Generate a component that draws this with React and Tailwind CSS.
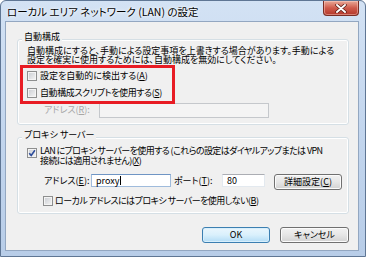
import React from 'react';

const font = "font-['Noto_Sans_CJK_JP',sans-serif] [font-feature-settings:'palt']";

const U = ({ children }) => <span className="inline-block leading-none underline underline-offset-[1px]">{children}</span>;

function Checkbox({ checked }) {
  return (
    <span className="flex h-[10px] w-[10px] shrink-0 items-center justify-center border border-[#8e8f8f] bg-linear-to-br from-[#c9ccd1] to-[#f6f6f6] shadow-[inset_0_0_0_1px_#f4f4f4]">
      {checked && (
        <svg width="8" height="8" viewBox="0 0 8 8">
          <path d="M1.2 4.2 L3.2 6.4 L6.9 1.3" fill="none" stroke="#2e4d9b" strokeWidth="1.6" />
        </svg>
      )}
    </span>
  );
}

function Button({ children, primary, className = '' }) {
  return (
    <div
      className={`flex items-center justify-center rounded-[3px] border text-[9px] leading-none ${
        primary
          ? 'border-[#3c7fb1] bg-linear-to-b from-[#eaf6fd] via-[#d9f0fc] to-[#b2dcf6] shadow-[inset_0_0_0_1px_#d8effc]'
          : 'border-[#707070] bg-linear-to-b from-[#f2f2f2] via-[#e6e6e6] to-[#d2d2d2] shadow-[inset_0_0_0_1px_#fbfbfb]'
      } ${className}`}
    >
      {children}
    </div>
  );
}

function Group({ title, children, className = '' }) {
  return (
    <fieldset className={`ml-[11px] mr-[9px] rounded-[3px] border border-[#d5dfe5] shadow-[inset_0_0_0_1px_#fff] ${className}`}>
      <legend className="ml-[4px] bg-[#f0f0f0] px-[2px] pb-[6px] text-[9px] leading-[11px]">{title}</legend>
      {children}
    </fieldset>
  );
}

export default function App() {
  return (
    <div className={`flex h-[257px] w-[366px] flex-col overflow-hidden rounded-t-[6px] border border-[#5f7694] bg-linear-to-b from-[#d3e2f4] via-[#c3d6ee] to-[#b8cde8] text-black ${font}`}>
      {/* title bar */}
      <div className="flex h-[20px] shrink-0 items-start justify-between">
        <span className="pl-[6px] pt-[5px] text-[10.5px] leading-[12px] [text-shadow:0_0_4px_#fff,0_0_2px_#fff]">
          ローカル エリア ネットワーク (LAN) の設定
        </span>
        <div className="mr-[6px] flex h-[15px] w-[36px] items-center justify-center rounded-b-[4px] border border-t-0 border-[#7a2d24] bg-linear-to-b from-[#e8a898] via-[#cf5a4b] to-[#b3382b] shadow-[inset_0_0_0_1px_rgba(255,215,205,0.45)]">
          <svg width="12" height="9" viewBox="0 0 12 9">
            <path d="M2 1 L10 8 M10 1 L2 8" stroke="#5a1d16" strokeWidth="3.4" strokeLinecap="round" />
            <path d="M2 1 L10 8 M10 1 L2 8" stroke="#fff" strokeWidth="1.9" strokeLinecap="round" />
          </svg>
        </div>
      </div>

      {/* client area */}
      <div className="mb-[5px] ml-[4px] mr-[6px] flex flex-1 flex-col border border-[#93a7c1] bg-[#f0f0f0] pt-[8.5px] text-[9px]">
        <Group title="自動構成" className="pb-[6px]">
          <p className="-mt-[2px] pl-[9px] leading-[9.5px]">
            自動構成にすると、手動による設定事項を上書きする場合があります。手動による
            <br />
            設定を確実に使用するためには、自動構成を無効にしてください。
          </p>
          <div className="relative z-[1] ml-[2px] flex w-[155px] flex-col gap-[1px] border-[3px] border-[#e81c24] pl-[4px]">
            <div className="flex h-[16px] items-center gap-[3px]">
              <Checkbox />
              <span>設定を自動的に検出する(<U>A</U>)</span>
            </div>
            <div className="flex h-[16px] items-center gap-[3px]">
              <Checkbox />
              <span className="tracking-[-0.4px]">自動構成スクリプトを使用する(<U>S</U>)</span>
            </div>
          </div>
          <div className="-mt-[1px] flex h-[15px] items-center pl-[26px]">
            <span className="w-[55px] text-[#a7a7a7]">
              アドレス(<U>R</U>):
            </span>
            <div className="h-[15px] w-[170px] border border-[#c5c8cc] bg-[#f4f4f4]" />
          </div>
        </Group>

        <Group title="プロキシ サーバー" className="mt-[4px] pb-[6px]">
          <div className="flex items-start gap-[3px] pl-[9px]">
            <span className="mt-[2.5px]">
              <Checkbox checked />
            </span>
            <p className="leading-[10px] tracking-[-0.6px]">
              LAN にプロキシ サーバーを使用する (これらの設定はダイヤルアップまたは VPN
              <br />
              接続には適用されません)(<U>X</U>)
            </p>
          </div>
          <div className="mt-[8px] flex items-start pl-[26px]">
            <span className="w-[47px] leading-[13px]">
              アドレス(<U>E</U>):
            </span>
            <div className="flex h-[13px] w-[80px] items-center border border-[#9fbbdc] border-t-[#6f95c4] bg-white pl-[4px] leading-none">
              proxy
              <span className="ml-[0.5px] h-[9px] w-px bg-black" />
            </div>
            <span className="ml-[3px] w-[48px] leading-[13px]">
              ポート(<U>T</U>):
            </span>
            <div className="flex h-[13px] w-[43px] items-center border border-[#e3e9ef] border-t-[#abadb3] bg-white pl-[4px] leading-none">
              80
            </div>
            <Button className="ml-[9px] h-[16px] w-[68px]">
              詳細設定(<U>C</U>)
            </Button>
          </div>
          <div className="mt-[6px] flex h-[11px] items-center gap-[2px] pl-[25px]">
            <Checkbox />
            <span className="tracking-[-0.55px]">ローカル アドレスにはプロキシ サーバーを使用しない(<U>B</U>)</span>
          </div>
        </Group>

        <div className="mr-[9px] mt-[13px] flex justify-end gap-[10px]">
          <Button primary className="h-[16px] w-[68px]">
            OK
          </Button>
          <Button className="h-[16px] w-[69px]">キャンセル</Button>
        </div>
      </div>
    </div>
  );
}
